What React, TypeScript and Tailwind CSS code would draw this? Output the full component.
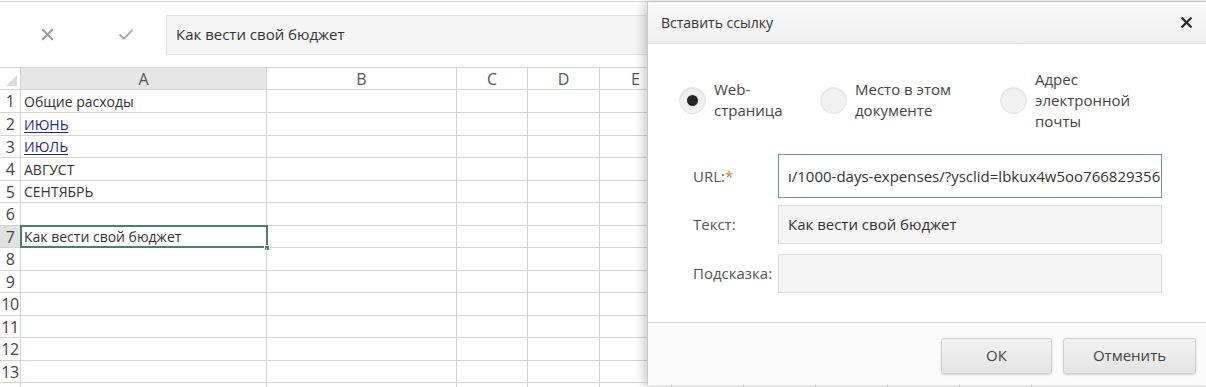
import { X, Check } from 'lucide-react'

const columns = [
  { name: 'A', width: 246 },
  { name: 'B', width: 190 },
  { name: 'C', width: 71 },
  { name: 'D', width: 72 },
  { name: 'E', width: 72 },
  { name: 'F', width: 72 },
  { name: 'G', width: 72 },
  { name: 'H', width: 72 },
  { name: 'I', width: 72 },
  { name: 'J', width: 72 },
]

const rowHeights = [23, 23, 22, 23, 22, 23, 22, 23, 22, 23, 22, 23, 22, 23]

const cells: Record<number, { text: string; link?: boolean }> = {
  1: { text: 'Общие расходы' },
  2: { text: 'ИЮНЬ', link: true },
  3: { text: 'ИЮЛЬ', link: true },
  4: { text: 'АВГУСТ' },
  5: { text: 'СЕНТЯБРЬ' },
  7: { text: 'Как вести свой бюджет' },
}

function Sheet() {
  return (
    <div className="flex flex-col">
      <div className="h-[66px] border-t border-[#d6d6d6] mt-px flex items-center">
        <div className="w-[166px] flex items-center">
          <div className="w-[94px] flex justify-center">
            <X size={19} strokeWidth={2.4} className="text-[#9a9a9a]" />
          </div>
          <div className="w-[64px] flex justify-center">
            <Check size={18} strokeWidth={2.4} className="text-[#a8a8a8]" />
          </div>
        </div>
        <div className="flex-1 h-[40px] bg-[#f5f5f5] border border-[#e1e1e1] flex items-center pl-[9px] text-[15px] text-[#333]">
          Как вести свой бюджет
        </div>
      </div>

      <div className="flex h-[23px] border-y border-[#d4d4d4]">
        <div className="w-[21px] shrink-0 relative border-r border-[#d4d4d4]">
          <div className="absolute right-[3px] bottom-[3px] w-0 h-0 border-l-[11px] border-l-transparent border-b-[11px] border-b-[#dcdcdc]" />
        </div>
        {columns.map((c) => (
          <div
            key={c.name}
            style={{ width: c.width }}
            className={`shrink-0 border-r border-[#d4d4d4] flex items-center justify-center text-[16px] text-[#555] ${
              c.name === 'A' ? 'bg-[#e6e6e6]' : ''
            }`}
          >
            {c.name}
          </div>
        ))}
      </div>

      {rowHeights.map((h, i) => {
        const r = i + 1
        const cell = cells[r]
        return (
          <div key={r} style={{ height: h }} className="flex border-b border-[#d4d4d4]">
            <div
              className={`w-[21px] shrink-0 border-r border-[#d4d4d4] flex items-center justify-center text-[16px] text-[#444] tracking-[-0.5px] ${
                r === 7 ? 'bg-[#e1e1e1]' : ''
              }`}
            >
              {r}
            </div>
            {columns.map((c, ci) => (
              <div
                key={c.name}
                style={{ width: c.width }}
                className="shrink-0 border-r border-[#d4d4d4] relative flex items-center"
              >
                {ci === 0 && cell && (
                  <span
                    className={`pl-[3px] text-[14px] whitespace-nowrap ${
                      cell.link ? 'text-[#1d2a8c] underline underline-offset-2' : 'text-[#333]'
                    }`}
                  >
                    {cell.text}
                  </span>
                )}
                {ci === 0 && r === 7 && (
                  <>
                    <div className="absolute -left-px -top-px -right-[2px] -bottom-px border-2 border-[#4e7d6c]" />
                    <div className="absolute -right-[4px] -bottom-[4px] w-[6px] h-[6px] bg-[#4e7d6c] border border-white" />
                  </>
                )}
              </div>
            ))}
          </div>
        )
      })}
    </div>
  )
}

function Radio({ checked, label, width }: { checked?: boolean; label: string[]; width?: string }) {
  return (
    <div className={`flex items-center gap-[8px] shrink-0 ${width ?? ''}`}>
      <div className="w-[27px] h-[27px] shrink-0 rounded-full bg-[#f1f1f1] border border-[#e2e2e2] shadow-[inset_0_1px_2px_rgba(0,0,0,0.06)] flex items-center justify-center">
        {checked && <div className="w-[11px] h-[11px] rounded-full bg-[#262626]" />}
      </div>
      <div className="text-[15px] leading-[21px] text-[#444] whitespace-nowrap">
        {label.map((l) => (
          <div key={l}>{l}</div>
        ))}
      </div>
    </div>
  )
}

function Field({ label, value, focused, required }: { label: string; value?: string; focused?: boolean; required?: boolean }) {
  return (
    <div className="flex items-center">
      <div className="w-[85px] text-[15px] text-[#555]">
        {label}
        {required && <span className="text-[#e0733a]">*</span>}
      </div>
      <div
        className={`w-[384px] flex items-center px-[9px] overflow-hidden whitespace-nowrap text-[15px] text-[#333] ${
          focused
            ? 'h-[44px] bg-white border border-[#6a9a88]'
            : 'h-[39px] bg-[#f5f5f5] border border-[#dcdcdc]'
        }`}
      >
        {value}
      </div>
    </div>
  )
}

function LinkDialog() {
  return (
    <div className="absolute left-[647px] top-[2px] w-[570px] h-[383px] bg-white border-l border-[#c8c8c8] shadow-[-3px_0_10px_rgba(0,0,0,0.22)] flex flex-col">
      <div className="h-[42px] shrink-0 flex items-center justify-between pl-[13px] pr-[22px] bg-gradient-to-b from-[#fafafa] to-[#efefef] border-b border-[#dddddd]">
        <span className="text-[14px] text-[#333]">Вставить ссылку</span>
        <X size={17} strokeWidth={3.4} className="text-[#2a2a2a]" />
      </div>

      <div className="flex-1 flex flex-col pl-[31px]">
        <div className="flex items-center h-[110px] pt-[2px]">
          <Radio checked width="w-[141px]" label={['Web-', 'страница']} />
          <Radio width="w-[180px]" label={['Место в этом', 'документе']} />
          <Radio label={['Адрес', 'электронной', 'почты']} />
        </div>
        <div className="flex flex-col gap-[7px] pl-[14px]">
          <Field label="URL:" required focused value="ı/1000-days-expenses/?ysclid=lbkux4w5oo766829356" />
          <div className="flex flex-col gap-[10px]">
            <Field label="Текст:" value="Как вести свой бюджет" />
            <Field label="Подсказка:" />
          </div>
        </div>
      </div>

      <div className="h-[63px] shrink-0 border-t border-[#d2d2d2] bg-[#fafafa] flex items-center gap-[11px] pl-[293px] pt-[3px]">
        <button className="w-[111px] h-[36px] rounded-[3px] border border-[#cfcfcf] bg-gradient-to-b from-[#f2f2f2] to-[#e4e4e4] shadow-[0_1px_2px_rgba(0,0,0,0.15)] text-[15px] text-[#444]">
          ОК
        </button>
        <button className="w-[133px] h-[36px] rounded-[3px] border border-[#cfcfcf] bg-gradient-to-b from-[#f2f2f2] to-[#e4e4e4] shadow-[0_1px_2px_rgba(0,0,0,0.15)] text-[15px] text-[#444]">
          Отменить
        </button>
      </div>
    </div>
  )
}

export default function App() {
  return (
    <div className="relative w-[1206px] h-[387px] overflow-hidden bg-white font-['Open_Sans',sans-serif]">
      <Sheet />
      <LinkDialog />
    </div>
  )
}
